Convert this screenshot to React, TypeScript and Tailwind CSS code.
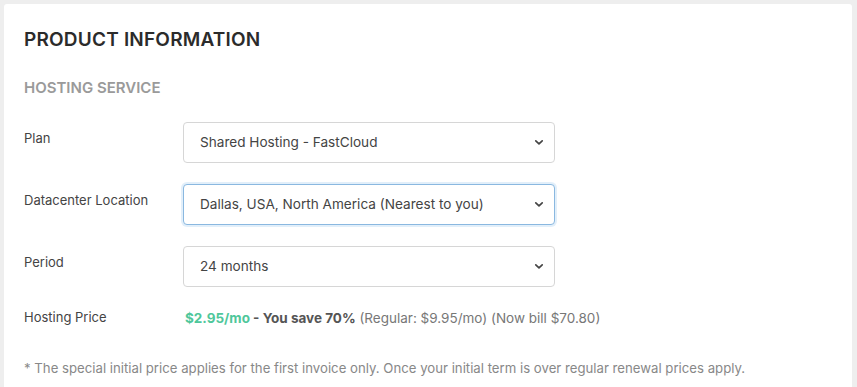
import React from "react";

const Chevron = () => (
  <svg width="10" height="7" viewBox="0 0 10 7" className="shrink-0">
    <path d="M1.8 1.8 L5 4.8 L8.2 1.8" fill="none" stroke="#444" strokeWidth="1.7" strokeLinecap="round" strokeLinejoin="round" />
  </svg>
);

const Select = ({ value, focused }: { value: string; focused?: boolean }) => (
  <div
    className={
      "w-[372px] h-[41px] rounded-[4px] bg-white flex items-center justify-between pl-[16px] pr-[10px] text-[13.6px] text-[#444] border " +
      (focused ? "border-[#8ab8e0] shadow-[0_0_0_2px_rgba(140,190,235,0.25)]" : "border-[#d6d6d6]")
    }
  >
    <span>{value}</span>
    <Chevron />
  </div>
);

const Row = ({ label, children }: { label: string; children: React.ReactNode }) => (
  <div className="flex items-center h-[41px]">
    <div className="w-[159px] text-[13px] text-[#444] -mt-[7px]">{label}</div>
    {children}
  </div>
);

export default function App() {
  return (
    <div className="w-[857px] h-[387px] bg-[#eeeeee] pt-[4px] pl-[4px] pr-[5px] overflow-hidden" style={{ fontFamily: "Inter, 'Noto Sans', sans-serif" }}>
      <div className="bg-white rounded-[3px] h-[400px] pl-[20px] pt-[25px]">
        <h1 className="text-[19px] font-semibold text-[#2b2b2b] leading-[22px] tracking-[0.2px]">PRODUCT INFORMATION</h1>
        <h2 className="mt-[28px] text-[15px] font-semibold text-[#9a9a9a] leading-[18px]">HOSTING SERVICE</h2>
        <div className="mt-[25px] flex flex-col gap-[21px]">
          <Row label="Plan">
            <Select value="Shared Hosting - FastCloud" />
          </Row>
          <Row label="Datacenter Location">
            <Select value="Dallas, USA, North America (Nearest to you)" focused />
          </Row>
          <Row label="Period">
            <Select value="24 months" />
          </Row>
        </div>
        <div className="flex items-center mt-[21px] h-[20px]">
          <div className="w-[161px] text-[13px] text-[#444]">Hosting Price</div>
          <div className="text-[13.5px] text-[#777]">
            <span className="font-bold text-[#4fc79b]">$2.95/mo</span>
            <span className="font-bold text-[#555]"> - You save 70%</span>
            <span> (Regular: $9.95/mo) (Now bill $70.80)</span>
          </div>
        </div>
        <p className="mt-[31px] text-[13.2px] text-[#888] leading-[18px]">
          * The special initial price applies for the first invoice only. Once your initial term is over regular renewal prices apply.
        </p>
      </div>
    </div>
  );
}
